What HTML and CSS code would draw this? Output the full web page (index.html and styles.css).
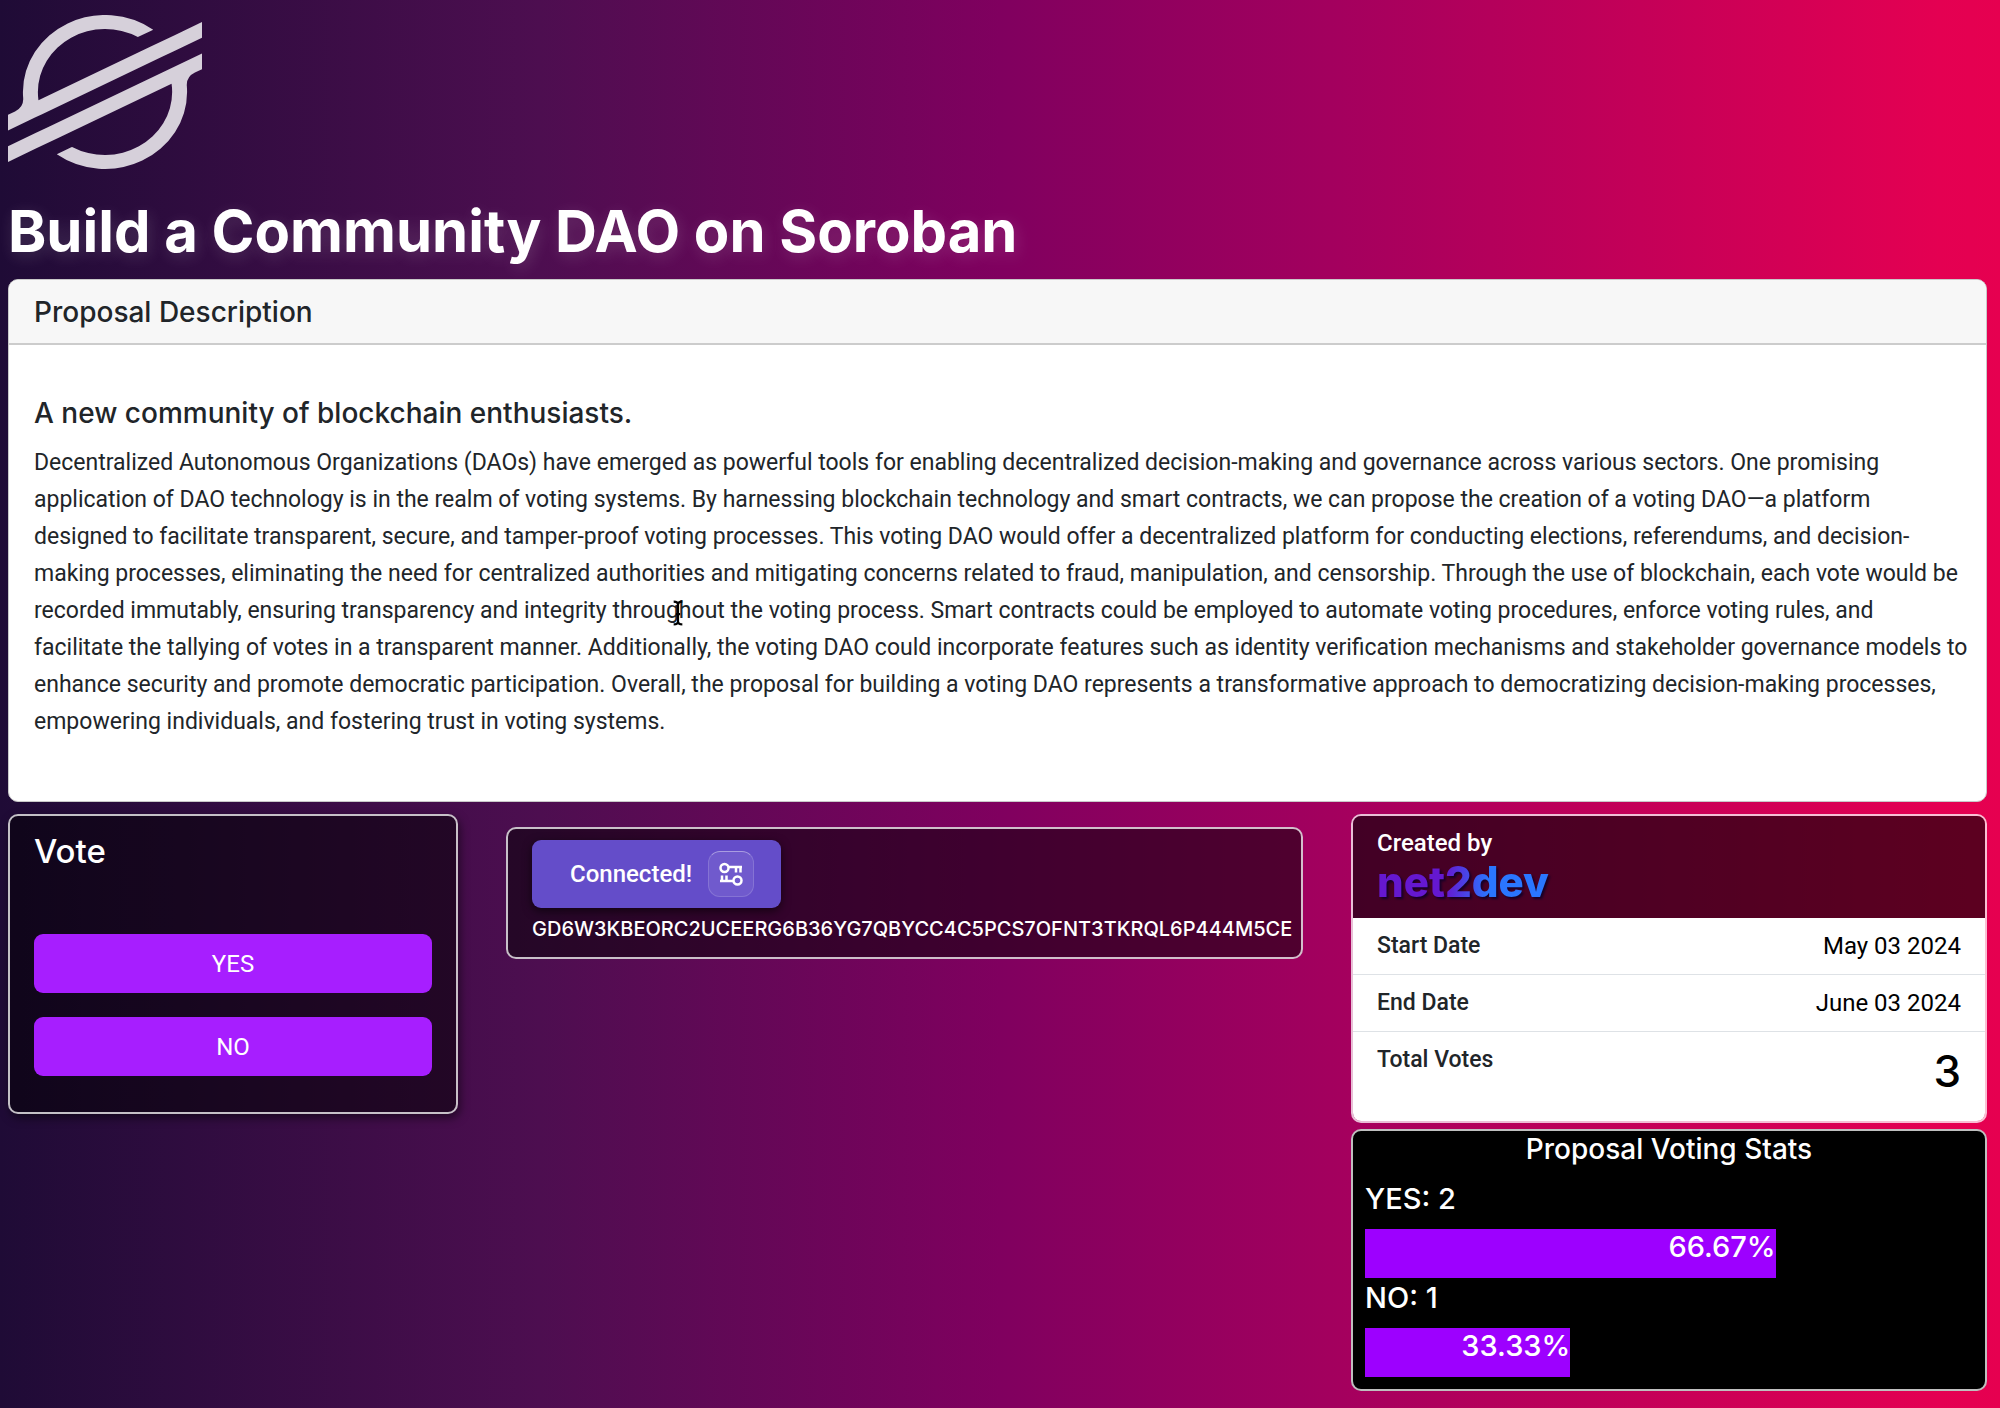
FILE: index.html
```html
<!DOCTYPE html>
<html lang="en">
<head>
<meta charset="utf-8">
<meta name="viewport" content="width=device-width, initial-scale=1">
<title>Community DAO</title>
<link rel="stylesheet" href="styles.css">
</head>
<body>
<header class="masthead">
  <svg class="stellar" viewBox="0 0 236.36 200" preserveAspectRatio="none" role="img" aria-label="Stellar">
    <path d="M203 26.16l-28.46 14.5-137.43 70a82.49 82.49 0 0 1-.7-10.69A81.87 81.87 0 0 1 158.2 28.6l16.29-8.3 2.43-1.24A100 100 0 0 0 18.18 100q0 3.82.29 7.61a18.19 18.19 0 0 1-9.88 17.58L0 129.57V150l25.29-12.89 8.19-4.18 8.07-4.11L186.43 55l16.28-8.29 33.65-17.15V9.14Z"/>
    <path d="M236.36 50 49.78 145 33.5 153.31 0 170.38v20.41l33.27-16.95 28.46-14.5L199.3 89.24A83.45 83.45 0 0 1 200 100 81.87 81.87 0 0 1 78.09 171.36l-1 .53-17.66 9A100 100 0 0 0 218.18 100c0-2.57-.1-5.14-.29-7.68a18.2 18.2 0 0 1 9.87-17.58l8.6-4.38Z"/>
  </svg>
  <h1 class="title">Build a Community DAO on Soroban</h1>
</header>
<main>
  <section class="card proposal">
    <h2 class="proposal-head">Proposal Description</h2>
    <div class="proposal-body">
      <h3 class="proposal-title">A new community of blockchain enthusiasts.</h3>
      <p class="proposal-text">Decentralized Autonomous Organizations (DAOs) have emerged as powerful tools for enabling decentralized decision-making and governance across various sectors. One promising application of DAO technology is in the realm of voting systems. By harnessing blockchain technology and smart contracts, we can propose the creation of a voting DAO—a platform<br> designed to facilitate transparent, secure, and tamper-proof voting processes. This voting DAO would offer a decentralized platform for conducting elections, referendums, and decision-making processes, eliminating the need for centralized authorities and mitigating concerns related to fraud, manipulation, and censorship. Through the use of blockchain, each vote would be recorded immutably, ensuring transparency and integrity throughout the voting process. Smart contracts could be employed to automate voting procedures, enforce voting rules, and<br> facilitate the tallying of votes in a transparent manner. Additionally, the voting DAO could incorporate features such as identity verification mechanisms and stakeholder governance models to enhance security and promote democratic participation. Overall, the proposal for building a voting DAO represents a transformative approach to democratizing decision-making processes,<br> empowering individuals, and fostering trust in voting systems.</p>
      <svg class="ibeam" viewBox="0 0 12 24" aria-hidden="true"><path d="M2 1.500q4 0 4 3 0-3 4-3M6 4v16M2 22.500q4 0 4-3 0 3 4 3M4 13h4"/></svg>
    </div>
  </section>
  <div class="columns">
    <section class="card vote">
      <h2 class="vote-title">Vote</h2>
      <button class="vote-button" type="button">YES</button>
      <button class="vote-button" type="button">NO</button>
    </section>
    <section class="card wallet">
      <button class="connect" type="button">Connected!
        <span class="connect-icon">
          <svg viewBox="0 0 24 24" aria-hidden="true"><circle cx="5.500" cy="6" r="4"/><path d="M9.500 5H23M17 5v5.500M21.500 5v5.500M1 19h13.500M3 19v-5.500M7.500 19v-5.500"/><circle cx="18.500" cy="18.500" r="4"/></svg>
        </span>
      </button>
      <p class="address">GD6W3KBEORC2UCEERG6B36YG7QBYCC4C5PCS7OFNT3TKRQL6P444M5CE</p>
    </section>
    <div class="side">
      <section class="card info">
        <div class="creator">
          <span>Created by</span>
          <a class="brand" href="#">net2dev</a>
        </div>
        <dl class="facts">
          <div class="fact"><dt>Start Date</dt><dd>May 03 2024</dd></div>
          <div class="fact"><dt>End Date</dt><dd>June 03 2024</dd></div>
          <div class="fact"><dt>Total Votes</dt><dd class="total">3</dd></div>
        </dl>
      </section>
      <section class="card stats">
        <h2 class="stats-title">Proposal Voting Stats</h2>
        <div class="stats-body">
          <p class="stats-label">YES: 2</p>
          <div class="bar" style="width:66.67%">66.67%</div>
          <p class="stats-label">NO: 1</p>
          <div class="bar" style="width:33.33%">33.33%</div>
        </div>
      </section>
    </div>
  </div>
</main>
</body>
</html>
```
FILE: styles.css
```css
* { box-sizing: border-box; }

body {
  margin: 0;
  min-height: 100vh;
  padding: 15px 13px 18px 8px;
  background: linear-gradient(to right, #1f0b36 0%, #4d0e50 27%, #80005f 50%, #a4005e 67%, #e40052 97%, #e60050 100%);
  color: #212529;
  font-family: Roboto, "Liberation Sans", sans-serif;
  font-size: 24px;
  line-height: 36px;
}

h1, h2, h3, p, dl, dd { margin: 0; font-weight: 500; }
h1, h2, h3, .address, .stats { font-family: Inter, "Liberation Sans", sans-serif; }
p { font-weight: 400; }
button { font: inherit; color: #fff; border: 0; cursor: pointer; }

.stellar {
  display: block;
  width: 194px;
  height: 154px;
  fill: #d6d0da;
}

.title {
  margin: 26px 0 12px;
  color: #fff;
  font-size: 58px;
  font-weight: 700;
  line-height: 72px;
  text-shadow: 2px 4px 16px rgba(255, 255, 255, .15);
}

.card {
  border: 2px solid rgba(255, 255, 255, .75);
  border-radius: 10px;
}

.proposal {
  overflow: hidden;
  border: 1px solid #c9c9c9;
  background: #fff;
}
.proposal-head {
  padding: 14px 25px 13px;
  border-bottom: 2px solid #ccc;
  background: #f7f7f7;
  font-size: 28px;
}
.proposal-body { position: relative; padding: 50px 16px 61px 25px; }
.proposal-title { margin-bottom: 13px; font-size: 28px; }
.proposal-text { padding-right: 2px; font-size: 23px; line-height: 37px; }
.ibeam {
  position: absolute;
  left: 662px;
  top: 255px;
  width: 14px;
  height: 26px;
  fill: none;
  stroke: #000;
  stroke-width: 2;
}

.columns {
  display: grid;
  grid-template-columns: minmax(0, 450fr) minmax(0, 797fr) minmax(0, 636fr);
  align-items: start;
  gap: 48px;
  margin-top: 12px;
}

.vote {
  display: flex;
  flex-direction: column;
  gap: 24px;
  padding: 15px 24px 36px;
  background: rgba(0, 0, 0, .5);
  box-shadow: 2px 4px 10px rgba(0, 0, 0, .5);
  color: #fff;
}
.vote-title { margin-bottom: 39px; font-size: 33px; line-height: 40px; }
.vote-button {
  height: 59px;
  border-radius: 9px;
  background: #a71eff;
}

.wallet {
  margin-top: 13px;
  padding: 11px 8px 10px 24px;
  background: rgba(0, 0, 0, .5);
  color: #fff;
}
.connect {
  display: flex;
  align-items: center;
  gap: 16px;
  padding: 11px 27px 11px 38px;
  border-radius: 9px;
  background: #644dc9;
  box-shadow: 0 3px 10px rgba(0, 0, 0, .6);
  font-weight: 500;
}
.connect-icon {
  display: grid;
  place-items: center;
  width: 46px;
  height: 46px;
  border: 1px solid rgba(255, 255, 255, .15);
  border-top-color: rgba(255, 255, 255, .4);
  border-radius: 12px;
  background: rgba(255, 255, 255, .08);
}
.connect-icon svg {
  width: 24px;
  height: 24px;
  fill: none;
  stroke: #fff;
  stroke-width: 2.5;
}
.address { margin-top: 3px; font-size: 20px; font-weight: 500; }

.side { display: grid; gap: 6px; }

.info { overflow: hidden; }
.creator {
  display: flex;
  flex-direction: column;
  align-items: flex-start;
  padding: 9px 24px 15px;
  background: rgba(0, 0, 0, .6);
  color: #fff;
  font-weight: 500;
}
.brand {
  background: linear-gradient(to right, #6518d0 40%, #2a76ff 65%);
  background-clip: text;
  color: transparent;
  filter: drop-shadow(2px 2px 1px rgba(10, 0, 40, .8));
  font-family: Inter, "Liberation Sans", sans-serif;
  font-size: 42px;
  font-weight: 800;
  line-height: 42px;
  text-decoration: none;
}
.facts { background: #fff; }
.fact {
  display: flex;
  justify-content: space-between;
  padding: 10px 24px;
}
.fact + .fact { border-top: 1px solid #dee2e6; }
.fact dt { font-size: 23px; font-weight: 500; }
.fact dd { color: #000; font-weight: 400; }
.fact .total {
  padding: 2px 0 13px;
  font-family: Inter, "Liberation Sans", sans-serif;
  font-size: 44px;
  font-weight: 500;
  line-height: 54px;
}

.stats {
  background: #000;
  color: #fff;
  font-size: 29px;
}
.stats-title { font-size: 28px; text-align: center; }
.stats-body { padding: 12px 4px 12px 12px; }
.stats-label { padding: 2px 0 12px; font-weight: 500; }
.bar {
  height: 49px;
  background: #9d00ff;
  font-weight: 500;
  text-align: right;
}
```
